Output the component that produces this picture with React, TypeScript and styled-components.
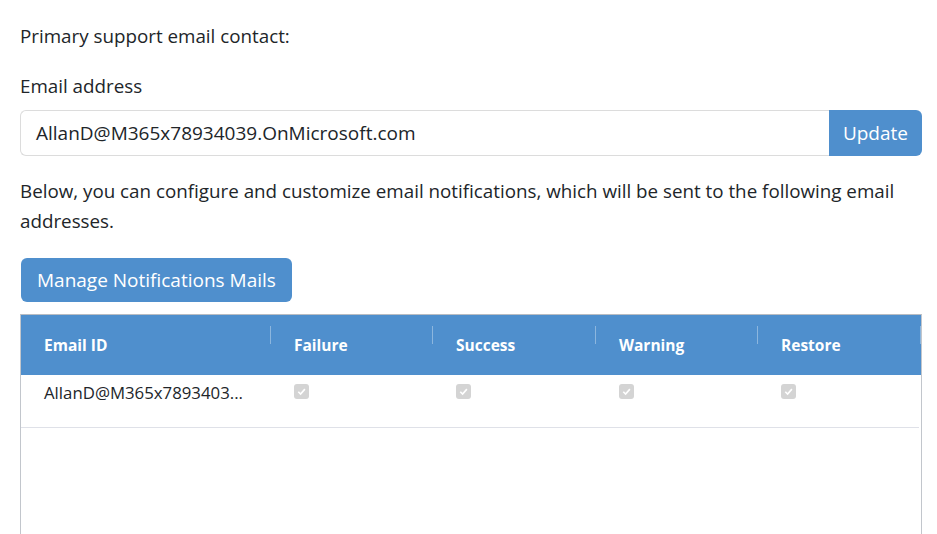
import styled, { createGlobalStyle } from "styled-components";

const Blue = "#4f8fcd";

const GlobalStyle = createGlobalStyle`
  html, body {
    margin: 0;
    padding: 0;
    background: #fff;
    font-family: "Open Sans", "Noto Sans", Arial, sans-serif;
    color: #212529;
    overflow: hidden;
  }
`;

const Page = styled.div`
  padding: 21px 15px 0 20px;
  display: flex;
  flex-direction: column;
`;

const Text = styled.p<{ $mb?: number }>`
  margin: 0 0 ${(p) => p.$mb ?? 0}px;
  font-size: 18.8px;
  line-height: 30px;
`;

const InputGroup = styled.div`
  display: flex;
  height: 46px;
  margin-bottom: 20px;
`;

const Input = styled.div`
  flex: 1;
  border: 1px solid #dcdcdc;
  border-right: none;
  border-radius: 6px 0 0 6px;
  display: flex;
  align-items: center;
  padding-left: 15px;
  font-size: 19px;
`;

const Button = styled.button<{ $radius?: string }>`
  border: none;
  background: ${Blue};
  color: #fff;
  font-family: inherit;
  font-size: 19px;
  padding: 0 14px;
  border-radius: ${(p) => p.$radius ?? "6px"};
  cursor: pointer;
`;

const ManageButton = styled(Button)`
  align-self: flex-start;
  height: 44px;
  margin: 22px 0 12px 1px;
  padding: 0 16px;
`;

const Table = styled.div`
  border: 1px solid #c2c6cc;
  border-top-color: #b8bcc2;
  height: 220px;
`;

const Grid = styled.div`
  display: grid;
  grid-template-columns: 250px 162px 163px 162px 163px;
`;

const HeaderRow = styled(Grid)`
  background: ${Blue};
  height: 60px;
  align-items: center;
`;

const HeadCell = styled.div`
  position: relative;
  padding-left: 23px;
  color: #fff;
  font-weight: 700;
  font-size: 15.5px;
  &::after {
    content: "";
    position: absolute;
    right: 0;
    top: -8px;
    height: 18px;
    border-right: 1px solid rgba(255, 255, 255, 0.35);
  }
`;

const BodyRow = styled(Grid)`
  height: 52px;
  border-bottom: 1px solid #dfe1e8;
  margin-right: 2px;
  align-items: start;
`;

const Cell = styled.div`
  padding: 6px 0 0 23px;
  font-size: 16.8px;
  white-space: nowrap;
  overflow: hidden;
  text-overflow: ellipsis;
`;

const CheckCell = styled(Cell)`
  display: flex;
  padding-top: 9px;
`;

const Check = styled.span`
  display: flex;
  align-items: center;
  justify-content: center;
  width: 15px;
  height: 15px;
  border-radius: 3px;
  background: #d4d4d4;
`;

function DisabledCheck() {
  return (
    <Check>
      <svg width="11" height="11" viewBox="0 0 12 12">
        <path d="M2.5 6.3 L5 8.7 L9.7 3.4" fill="none" stroke="#fff" strokeWidth="1.8" />
      </svg>
    </Check>
  );
}

const columns = ["Email ID", "Failure", "Success", "Warning", "Restore"];

function App() {
  return (
    <>
      <GlobalStyle />
      <Page>
        <Text $mb={20}>Primary support email contact:</Text>
        <Text $mb={9}>Email address</Text>
        <InputGroup>
          <Input>AllanD@M365x78934039.OnMicrosoft.com</Input>
          <Button $radius="0 6px 6px 0">Update</Button>
        </InputGroup>
        <Text>
          Below, you can configure and customize email notifications, which will be sent to the
          following email addresses.
        </Text>
        <ManageButton>Manage Notifications Mails</ManageButton>
        <Table>
          <HeaderRow>
            {columns.map((c) => (
              <HeadCell key={c}>{c}</HeadCell>
            ))}
          </HeaderRow>
          <BodyRow>
            <Cell>AllanD@M365x7893403...</Cell>
            {[0, 1, 2, 3].map((i) => (
              <CheckCell key={i}>
                <DisabledCheck />
              </CheckCell>
            ))}
          </BodyRow>
        </Table>
      </Page>
    </>
  );
}

export default App;
